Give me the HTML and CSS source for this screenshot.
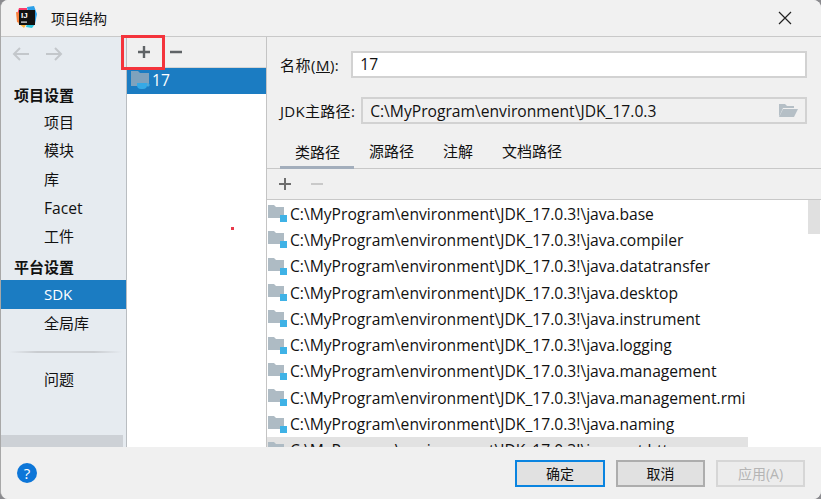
FILE: index.html
```html
<!DOCTYPE html>
<html lang="zh-CN">
<head>
  <meta charset="UTF-8" />
  <meta name="viewport" content="width=device-width, initial-scale=1.0"/>
  <title>项目结构</title>
  <link rel="stylesheet" href="styles.css">
</head>
<body>
  <svg class="defs" width="0" height="0">
    <symbol id="root-icon" viewBox="0 0 19 17">
      <path d="M0 0h6l2 2h8v11H0z" fill="#aebbc4"/>
      <rect x="12" y="10" width="7" height="7" fill="#3fb2e6"/>
    </symbol>
  </svg>
  <div class="window">
    <div class="titlebar">
      <svg class="logo" width="24" height="24" viewBox="0 0 24 24">
        <path d="M5 2h8v6H3z" fill="#fc3a6b"/>
        <path d="M2 6l5 1v11l-4-2z" fill="#f9803a"/>
        <path d="M13 1l7-1 3 8-2 10-6-6z" fill="#2c9fe8"/>
        <path d="M4 17h9l-3 5z" fill="#fdb53a"/>
        <path d="M13 18h8l-3 4-6-1z" fill="#2fc8e0"/>
        <rect x="5" y="4" width="16" height="15" fill="#111"/>
        <text class="logo-text" x="7" y="12">IJ</text>
        <rect x="7" y="15.5" width="6" height="1.2" fill="#eee"/>
      </svg>
      <span class="title">项目结构</span>
      <svg class="close" width="14" height="14" viewBox="0 0 14 14">
        <path d="M1 1l12 12M13 1L1 13" stroke="#222" stroke-width="1.2" fill="none"/>
      </svg>
    </div>

    <div class="main">
      <div class="sidebar">
        <div class="nav-arrows">
          <svg width="18" height="14" viewBox="0 0 18 14">
            <path d="M17 7H2M8 1L2 7l6 6" stroke="#c3c7cb" stroke-width="2" fill="none"/>
          </svg>
          <svg width="18" height="14" viewBox="0 0 18 14">
            <path d="M1 7h15M10 1l6 6-6 6" stroke="#c3c7cb" stroke-width="2" fill="none"/>
          </svg>
        </div>
        <div class="nav-head">项目设置</div>
        <div class="nav-item">项目</div>
        <div class="nav-item">模块</div>
        <div class="nav-item">库</div>
        <div class="nav-item latin">Facet</div>
        <div class="nav-item">工件</div>
        <div class="nav-head">平台设置</div>
        <div class="nav-item selected">SDK</div>
        <div class="nav-item">全局库</div>
        <div class="nav-sep"></div>
        <div class="nav-item">问题</div>
        <div class="nav-scroll"></div>
      </div>

      <div class="sdk-col">
        <div class="sdk-tools">
          <svg class="tool" width="14" height="14" viewBox="0 0 14 14">
            <path d="M7 1v12M1 7h12" stroke="#5f6366" stroke-width="2.4" fill="none"/>
          </svg>
          <svg class="tool" width="14" height="14" viewBox="0 0 14 14">
            <path d="M1 7h12" stroke="#5f6366" stroke-width="2.4" fill="none"/>
          </svg>
        </div>
        <div class="sdk-row">
          <svg width="22" height="20" viewBox="0 0 22 20">
            <path d="M1 1h7l2 2h9v13H1z" fill="#7fa2bd"/>
            <path d="M7 13h10v2a4 4 0 0 1-4 4h-2a4 4 0 0 1-4-4z" fill="#35a9e6"/>
            <path d="M17 14h2v2h-2" stroke="#35a9e6" fill="none"/>
          </svg>
          <span class="latin">17</span>
        </div>
      </div>

      <div class="detail">
        <div class="field name-field">
          <label>名称(<u>M</u>):</label>
          <div class="input latin">17</div>
        </div>
        <div class="field home-field">
          <label>JDK主路径:</label>
          <div class="input readonly">
            <span class="latin">C:\MyProgram\environment\JDK_17.0.3</span>
            <svg width="20" height="15" viewBox="0 0 20 15">
              <path d="M1 1h6l2 2h7v2H5L1 14z" fill="#b5bfc6"/>
              <path d="M5 6h15l-4 8H1z" fill="#b5bfc6"/>
            </svg>
          </div>
        </div>
        <div class="tabs">
          <div class="tab active">类路径</div>
          <div class="tab">源路径</div>
          <div class="tab">注解</div>
          <div class="tab">文档路径</div>
        </div>
        <div class="path-tools">
          <svg width="14" height="14" viewBox="0 0 14 14">
            <path d="M7 1v12M1 7h12" stroke="#6e6e6e" stroke-width="2" fill="none"/>
          </svg>
          <svg width="14" height="14" viewBox="0 0 14 14">
            <path d="M1 7h12" stroke="#c9c9c9" stroke-width="2" fill="none"/>
          </svg>
        </div>
        <div class="path-list">
          <div class="paths">
            <div class="path"><svg width="19" height="17"><use href="#root-icon"/></svg>C:\MyProgram\environment\JDK_17.0.3!\java.base</div>
            <div class="path"><svg width="19" height="17"><use href="#root-icon"/></svg>C:\MyProgram\environment\JDK_17.0.3!\java.compiler</div>
            <div class="path"><svg width="19" height="17"><use href="#root-icon"/></svg>C:\MyProgram\environment\JDK_17.0.3!\java.datatransfer</div>
            <div class="path"><svg width="19" height="17"><use href="#root-icon"/></svg>C:\MyProgram\environment\JDK_17.0.3!\java.desktop</div>
            <div class="path"><svg width="19" height="17"><use href="#root-icon"/></svg>C:\MyProgram\environment\JDK_17.0.3!\java.instrument</div>
            <div class="path"><svg width="19" height="17"><use href="#root-icon"/></svg>C:\MyProgram\environment\JDK_17.0.3!\java.logging</div>
            <div class="path"><svg width="19" height="17"><use href="#root-icon"/></svg>C:\MyProgram\environment\JDK_17.0.3!\java.management</div>
            <div class="path"><svg width="19" height="17"><use href="#root-icon"/></svg>C:\MyProgram\environment\JDK_17.0.3!\java.management.rmi</div>
            <div class="path"><svg width="19" height="17"><use href="#root-icon"/></svg>C:\MyProgram\environment\JDK_17.0.3!\java.naming</div>
            <div class="path hover"><svg width="19" height="17"><use href="#root-icon"/></svg>C:\MyProgram\environment\JDK_17.0.3!\java.net.http</div>
          </div>
          <div class="scrollbar"></div>
        </div>
      </div>
    </div>

    <div class="footer">
      <div class="help">?</div>
      <div class="buttons">
        <div class="btn primary">确定</div>
        <div class="btn">取消</div>
        <div class="btn disabled">应用(A)</div>
      </div>
    </div>

    <div class="highlight"></div>
    <div class="dot"></div>
  </div>
</body>
</html>
```

FILE: styles.css
```css
* {
  box-sizing: border-box;
}
html, body {
  margin: 0;
  height: 100%;
}
body {
  background: #8b8b8f;
  overflow: hidden;
  font-family: "Open Sans", "Noto Sans CJK SC", sans-serif;
  font-size: 15px;
  color: #111;
}
.defs {
  position: absolute;
}
.latin {
  font-size: 15.65px;
}
.window {
  position: relative;
  width: 821px;
  height: 499px;
  display: flex;
  flex-direction: column;
  background: #f0f0f0;
  border-radius: 8px;
  border-left: 1px solid #a8a8a8;
  overflow: hidden;
}

/* title bar */
.titlebar {
  height: 37px;
  flex: none;
  display: flex;
  align-items: center;
  padding: 0 29px 0 13px;
  background: #f1f1f1;
  border-bottom: 1px solid #c9c9c9;
}
.logo-text {
  font-family: "Liberation Sans", sans-serif;
  font-size: 8px;
  font-weight: bold;
  fill: #fff;
}
.title {
  margin-left: 13px;
  font-size: 14px;
}
.close {
  margin-left: auto;
}

.main {
  flex: 1;
  display: flex;
  min-height: 0;
}

/* left nav */
.sidebar {
  width: 126px;
  flex: none;
  display: flex;
  flex-direction: column;
  background: #e6ebf0;
  border-right: 1px solid #b9bdc1;
}
.nav-arrows {
  height: 42px;
  flex: none;
  display: flex;
  gap: 15px;
  align-items: center;
  padding: 0 0 8px 11px;
}
.nav-head, .nav-item {
  height: 28.7px;
  flex: none;
  line-height: 28.7px;
}
.nav-head {
  padding: 2px 0 0 13px;
  font-weight: bold;
}
.nav-item {
  padding-left: 43px;
}
.nav-item.selected {
  background: #1b7cc2;
  color: #fff;
}
.nav-sep {
  height: 2px;
  flex: none;
  margin: 14px 4px 12px 8px;
  background: linear-gradient(90deg, #e6ebf0, #c9ccd0 25%, #c9ccd0 75%, #e6ebf0);
}
.nav-scroll {
  height: 12px;
  flex: none;
  margin-top: auto;
  margin-right: 3px;
  background: #cdd1d6;
}

/* sdk list */
.sdk-col {
  width: 140px;
  flex: none;
  background: #fff;
  border-right: 1px solid #c4c4c4;
}
.sdk-tools {
  height: 31px;
  display: flex;
  align-items: center;
  gap: 18px;
  padding-left: 10px;
  background: #f0f0f0;
  border-bottom: 1px solid #d4d4d4;
}
.sdk-row {
  height: 26px;
  display: flex;
  align-items: center;
  gap: 0;
  padding: 0 0 2px 3px;
  background: #1b7cc2;
  color: #fff;
}

/* right side */
.detail {
  flex: 1;
  min-width: 0;
  display: flex;
  flex-direction: column;
}
.field {
  display: flex;
  align-items: center;
  padding: 0 14px 0 13px;
}
.name-field {
  margin-top: 14px;
}
.home-field {
  margin-top: 19px;
}
.field label {
  flex: none;
}
.name-field label {
  letter-spacing: 0.5px;
}
.name-field .input {
  margin-left: 12px;
  padding-bottom: 2px;
}
.home-field label {
  letter-spacing: 0.3px;
}
.home-field .input {
  margin-left: 6px;
}
.input {
  flex: 1;
  height: 27px;
  display: flex;
  align-items: center;
  justify-content: space-between;
  padding: 0 7px;
  background: #fff;
  border: 2px solid #d2d2d2;
}
.input.readonly {
  background: #f0f0f0;
}
.tabs {
  height: 45px;
  flex: none;
  display: flex;
  align-items: flex-end;
  padding-left: 13px;
  border-bottom: 1px solid #c8c8c8;
}
.tab {
  height: 32px;
  padding: 4px 14px 0 15px;
}
.tab.active {
  border-bottom: 3px solid #a3aebc;
  margin-bottom: -1px;
}
.path-tools {
  height: 31px;
  flex: none;
  display: flex;
  align-items: center;
  gap: 18px;
  padding-left: 11px;
  border-bottom: 1px solid #c8c8c8;
}
.path-list {
  flex: 1;
  min-height: 0;
  display: flex;
  background: #fff;
  overflow: hidden;
}
.paths {
  width: 481px;
  flex: none;
}
.path {
  height: 26.3px;
  display: flex;
  align-items: center;
  gap: 3px;
  padding: 1px 0 0 1px;
  font-size: 15.65px;
  white-space: nowrap;
}
.path.hover {
  background: #e2e2e2;
}
.scrollbar {
  width: 12px;
  height: 34px;
  margin-left: auto;
  margin-right: 1px;
  background: #e0e0e0;
}

/* bottom buttons */
.footer {
  height: 52px;
  flex: none;
  display: flex;
  align-items: center;
  justify-content: space-between;
  padding: 0 16px;
  background: #f0f0f0;
}
.help {
  width: 20px;
  height: 20px;
  border-radius: 50%;
  background: #0d76d8;
  color: #fff;
  font-size: 15px;
  line-height: 20px;
  text-align: center;
}
.buttons {
  display: flex;
  gap: 11px;
}
.btn {
  width: 89px;
  height: 27px;
  line-height: 23px;
  text-align: center;
  font-size: 14px;
  background: #e1e1e1;
  border: 2px solid #adadad;
}
.btn.primary {
  width: 90px;
  border-color: #0a84e0;
}
.btn.disabled {
  background: #ececec;
  border-color: #d6d6d6;
  color: #b5b5b5;
}

/* annotations drawn over the dialog */
.highlight {
  position: absolute;
  left: 120px;
  top: 35px;
  width: 44px;
  height: 35px;
  border: 3px solid #f4343c;
}
.dot {
  position: absolute;
  left: 230px;
  top: 227px;
  width: 3px;
  height: 3px;
  background: #e8394a;
}
```
